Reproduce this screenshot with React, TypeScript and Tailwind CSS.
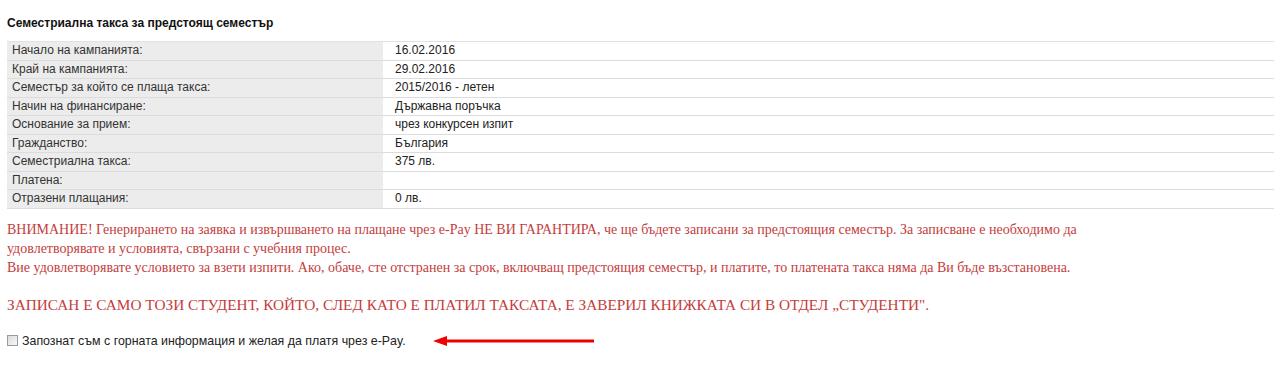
const ROWS: { label: string; value: string }[] = [
  { label: 'Начало на кампанията:', value: '16.02.2016' },
  { label: 'Край на кампанията:', value: '29.02.2016' },
  { label: 'Семестър за който се плаща такса:', value: '2015/2016 - летен' },
  { label: 'Начин на финансиране:', value: 'Държавна поръчка' },
  { label: 'Основание за прием:', value: 'чрез конкурсен изпит' },
  { label: 'Гражданство:', value: 'България' },
  { label: 'Семестриална такса:', value: '375 лв.' },
  { label: 'Платена:', value: '' },
  { label: 'Отразени плащания:', value: '0 лв.' },
];

export default function App() {
  return (
    <div className="min-h-[365px] bg-white px-[7px] pt-[16px] font-['Liberation_Sans',Arial,sans-serif] text-[12px] text-[#222]">
      <h2 className="h-[14px] text-[12px] font-bold leading-[14px] text-[#111]">
        Семестриална такса за предстоящ семестър
      </h2>

      <div className="mt-[11px] w-[1267px] border-t border-[#e2e2e2]">
        {ROWS.map(({ label, value }) => (
          <div key={label} className="flex h-[18.5px] border-b border-[#dcdcdc]">
            <div className="w-[376px] bg-[#ececec] pl-[5px] leading-[17.5px] text-[#333]">{label}</div>
            <div className="flex-1 pl-[12px] leading-[17.5px] text-[#222]">{value}</div>
          </div>
        ))}
      </div>

      <div className="mt-[11px] font-['Liberation_Serif','Times_New_Roman',serif] text-[14px] leading-[19px] text-[#c43d3d]">
        <p className="whitespace-nowrap">
          ВНИМАНИЕ! Генерирането на заявка и извършването на плащане чрез e-Pay НЕ ВИ ГАРАНТИРА, че ще бъдете записани за предстоящия семестър. За записване е необходимо да
        </p>
        <p>удовлетворявате и условията, свързани с учебния процес.</p>
        <p>
          Вие удовлетворявате условието за взети изпити. Ако, обаче, сте отстранен за срок, включващ предстоящия семестър, и платите, то платената такса няма да Ви бъде възстановена.
        </p>
        <p className="mt-[18px] text-[15.3px] leading-[20px]">
          ЗАПИСАН Е САМО ТОЗИ СТУДЕНТ, КОЙТО, СЛЕД КАТО Е ПЛАТИЛ ТАКСАТА, Е ЗАВЕРИЛ КНИЖКАТА СИ В ОТДЕЛ „СТУДЕНТИ".
        </p>
      </div>

      <div className="mt-[17px] flex items-center">
        <label className="flex items-center gap-[4px] text-[12.4px] text-[#222]">
          <span className="h-[11px] w-[11px] border border-[#9a9a9a] bg-gradient-to-br from-[#dcdcdc] to-[#f8f8f8]" />
          Запознат съм с горната информация и желая да платя чрез e-Pay.
        </label>
        <svg width="162" height="10" viewBox="0 0 162 10" className="ml-[27px]">
          <line x1="10" y1="5" x2="161" y2="5" stroke="#ee0000" strokeWidth="3" />
          <polygon points="0,5 14,0 14,10" fill="#ee0000" />
        </svg>
      </div>
    </div>
  );
}
